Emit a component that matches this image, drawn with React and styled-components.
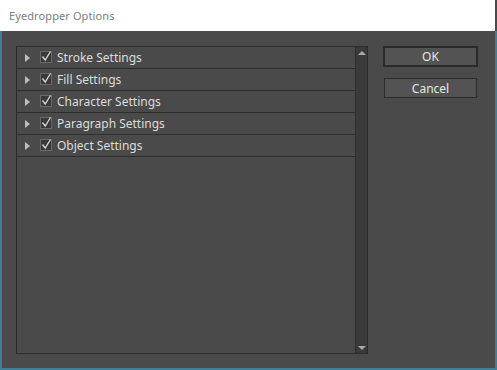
import React from "react";
import styled, { createGlobalStyle } from "styled-components";

const Global = createGlobalStyle`
  html, body { margin: 0; padding: 0; background: #4a4a4a; }
  body { font-family: "Segoe UI", "Noto Sans", "Open Sans", sans-serif; }
`;

const Window = styled.div`
  width: 497px;
  height: 370px;
  display: flex;
  flex-direction: column;
  box-sizing: border-box;
  overflow: hidden;
`;

const TitleBar = styled.div`
  height: 31px;
  flex: none;
  background: #ffffff;
  display: flex;
  align-items: center;
  padding-left: 9px;
  padding-bottom: 1px;
  box-sizing: border-box;
  border-right: 2px solid #4a4a4a;
  color: #7d7d7d;
  font-size: 11px;
  letter-spacing: 0.1px;
`;

const Body = styled.div`
  flex: 1;
  background: #4a4a4a;
  border-left: 2px solid #3e7f96;
  border-right: 2px solid #3e7f96;
  border-bottom: 2px solid #3e7f96;
  display: flex;
  align-items: flex-start;
  padding: 15px 0 0 14px;
  gap: 15px;
  box-sizing: border-box;
`;

const ListBox = styled.div`
  width: 352px;
  height: 308px;
  box-sizing: border-box;
  border: 1px solid #2b2b2b;
  display: flex;
`;

const List = styled.div`
  flex: 1;
  display: flex;
  flex-direction: column;
`;

const Row = styled.div`
  height: 22px;
  box-sizing: border-box;
  border-bottom: 1px solid #2e2e2e;
  display: flex;
  align-items: center;
  padding-left: 8px;
  color: #dcdcdc;
  font-size: 12px;
`;

const Triangle = styled.span`
  width: 0;
  height: 0;
  border-top: 4px solid transparent;
  border-bottom: 4px solid transparent;
  border-left: 5px solid #bdbdbd;
  margin-right: 10px;
`;

const Check = styled.span`
  position: relative;
  width: 12px;
  height: 12px;
  box-sizing: border-box;
  border: 1px solid #6a6a6a;
  background: #393939;
  margin-right: 5px;
  margin-top: -2px;
  svg {
    position: absolute;
    left: 0px;
    top: -2px;
  }
`;

const Label = styled.span`
  line-height: 1;
`;

const Scrollbar = styled.div`
  width: 12px;
  background: #3a3a3a;
  border-left: 1px solid #2f2f2f;
  display: flex;
  flex-direction: column;
  justify-content: space-between;
  align-items: center;
  padding: 4px 0 3px;
  box-sizing: border-box;
`;

const Arrow = styled.span`
  width: 0;
  height: 0;
  border-left: 4px solid transparent;
  border-right: 4px solid transparent;
  ${(p) =>
    p.$up
      ? "border-bottom: 4px solid #a8a8a8;"
      : "border-top: 4px solid #a8a8a8;"}
`;

const Buttons = styled.div`
  display: flex;
  flex-direction: column;
  gap: 11px;
`;

const Button = styled.button`
  height: ${(p) => (p.$default ? "21px" : "20px")};
  width: ${(p) => (p.$default ? "95px" : "93px")};
  margin-left: ${(p) => (p.$default ? "0" : "1px")};
  box-sizing: border-box;
  background: #535353;
  border: ${(p) => (p.$default ? "2px solid #2a2a2a" : "1px solid #2c2c2c")};
  color: #e6e6e6;
  font-family: "Segoe UI", "Noto Sans", "Open Sans", sans-serif;
  font-size: 12px;
  padding: 0;
  display: flex;
  align-items: center;
  justify-content: center;
`;

const items = [
  "Stroke Settings",
  "Fill Settings",
  "Character Settings",
  "Paragraph Settings",
  "Object Settings",
];

function CheckMark() {
  return (
    <svg width="11" height="12" viewBox="0 0 11 12">
      <path d="M1.5 6.5 L4.2 10 L9.5 1.5" fill="none" stroke="#d8d8d8" strokeWidth="1.3" />
    </svg>
  );
}

export default function App() {
  return (
    <Window>
      <Global />
      <TitleBar>Eyedropper Options</TitleBar>
      <Body>
        <ListBox>
          <List>
            {items.map((t) => (
              <Row key={t}>
                <Triangle />
                <Check>
                  <CheckMark />
                </Check>
                <Label>{t}</Label>
              </Row>
            ))}
          </List>
          <Scrollbar>
            <Arrow $up />
            <Arrow />
          </Scrollbar>
        </ListBox>
        <Buttons>
          <Button $default>OK</Button>
          <Button>Cancel</Button>
        </Buttons>
      </Body>
    </Window>
  );
}
